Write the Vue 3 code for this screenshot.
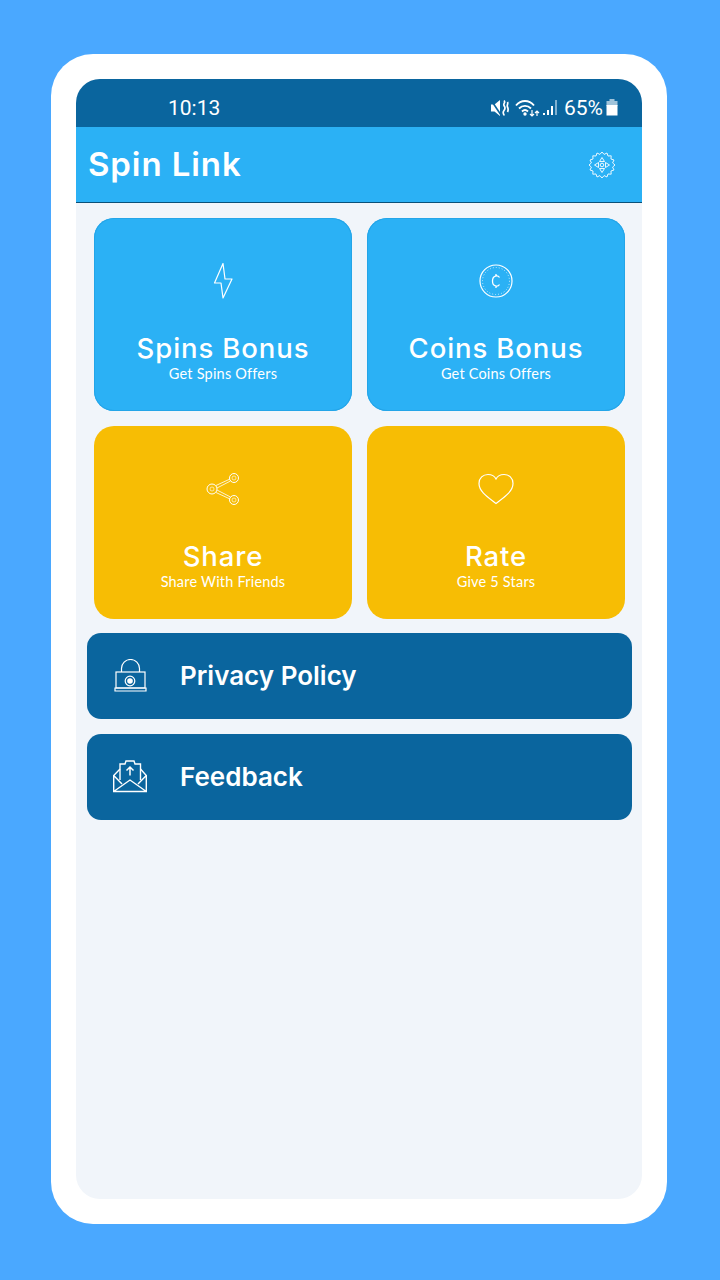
<script setup>
const cards = [
  { title: 'Spins Bonus', sub: 'Get Spins Offers', icon: 'bolt', tone: 'blue' },
  { title: 'Coins Bonus', sub: 'Get Coins Offers', icon: 'coin', tone: 'blue' },
  { title: 'Share', sub: 'Share With Friends', icon: 'share', tone: 'yellow' },
  { title: 'Rate', sub: 'Give 5 Stars', icon: 'heart', tone: 'yellow' }
]

// scalloped outline of the settings gear
const teeth = 16
let gear = ''
for (let i = 0; i < teeth * 2; i++) {
  const r = i % 2 === 0 ? 13 : 10.8
  const a = (i / (teeth * 2)) * Math.PI * 2
  const x = (14 + r * Math.cos(a)).toFixed(2)
  const y = (14 + r * Math.sin(a)).toFixed(2)
  gear += (i === 0 ? 'M' : 'L') + x + ' ' + y
}
gear += 'z'
</script>

<template>
  <div class="page">
    <div class="frame">
      <div class="screen">
        <div class="status">
          <span class="clock">10:13</span>
          <div class="status-right">
            <svg class="st-mute" width="19" height="18" viewBox="0 0 19 18">
              <path d="M1 5.500h3.500L10 1v16l-5.500-4.500H1z" fill="#fff" />
              <path d="M1 1l10 15" stroke="#0a659e" stroke-width="1.600" />
              <path d="M14 1.500c2 2-1 3 0 5s2 2.500 0 5 0 3 0 5M17.500 3c1 2-1 3 0 5s1 3 0 5" stroke="#fff" stroke-width="1.700" fill="none" />
            </svg>
            <svg class="st-wifi" width="25" height="18" viewBox="0 0 25 18">
              <path d="M1 6.500c5-6 13-6 18 0M4 9.500c3.500-3.500 8.500-3.500 12 0M7 12.500c2-2 4-2 6 0" stroke="#fff" stroke-width="1.900" fill="none" />
              <circle cx="10" cy="15" r="1.700" fill="#fff" />
              <path d="M17 11v6M15 15l2 2 2-2M22 17v-5M20 14l2-2 2 2" stroke="#fff" stroke-width="1.200" fill="none" />
            </svg>
            <svg class="st-signal" width="15" height="17" viewBox="0 0 15 17">
              <rect x="0" y="14" width="2" height="2" fill="#fff" />
              <rect x="4" y="11" width="2" height="5" fill="#fff" />
              <rect x="8" y="7" width="2" height="9" fill="#fff" />
              <rect x="12" y="1" width="2" height="15" fill="#7fb0d0" />
            </svg>
            <span class="pct">65%</span>
            <svg class="st-batt" width="12" height="17" viewBox="0 0 12 17">
              <rect x="3.500" y="0" width="5" height="2" fill="#9fc3da" />
              <rect x="0.500" y="2" width="11" height="5" fill="#9fc3da" />
              <rect x="0.500" y="6" width="11" height="10.500" fill="#fff" />
            </svg>
          </div>
        </div>

        <div class="appbar">
          <h1 class="app-title">Spin Link</h1>
          <svg width="28" height="28" viewBox="0 0 28 28" fill="none" stroke="#fff" stroke-width="0.900">
            <path :d="gear" stroke-linejoin="round" />
            <circle cx="14" cy="14" r="1.800" />
            <path d="M11.500 10.500l2.500-4 2.500 4zM11.500 17.500l2.500 4 2.500-4zM10.500 11.500l-4 2.500 4 2.500zM17.500 11.500l4 2.500-4 2.500z" />
          </svg>
        </div>

        <div class="content">
          <div class="grid">
            <div v-for="c in cards" :key="c.title" class="card" :class="c.tone">
              <div class="card-icon">
                <svg v-if="c.icon === 'bolt'" width="20" height="36" viewBox="0 0 20 36" fill="none" stroke="#fff" stroke-width="1.200" stroke-linejoin="round">
                  <path d="M10 .5L1.500 20H8l2 15 9-19h-7z" />
                </svg>
                <svg v-else-if="c.icon === 'coin'" width="34" height="34" viewBox="0 0 34 34" fill="none" stroke="#fff">
                  <circle cx="17" cy="17" r="16" stroke-width="1.200" />
                  <circle cx="17" cy="17" r="13.500" stroke-width="0.700" stroke-dasharray="1 2" />
                  <path d="M20.500 13.500c-1.500-2.500-7-2.500-7 3.500s5.500 6 7 3.500M17 10v2.500M17 21.500V24" stroke-width="1.300" />
                </svg>
                <svg v-else-if="c.icon === 'share'" width="34" height="34" viewBox="0 0 34 34" fill="none" stroke="#fff" stroke-width="1">
                  <circle cx="6" cy="17" r="5" />
                  <circle cx="6" cy="17" r="2" stroke-width="0.600" />
                  <circle cx="28" cy="6" r="4.500" />
                  <circle cx="28" cy="6" r="2" stroke-width="0.600" />
                  <circle cx="28" cy="28" r="4.500" />
                  <circle cx="28" cy="28" r="2" stroke-width="0.600" />
                  <path d="M10 13.500l14-6.500M11 16l13.500-7M10 20.500l14 6.500M11 18l13.500 7" stroke-width="0.800" />
                </svg>
                <svg v-else width="36" height="32" viewBox="0 0 36 32" fill="none" stroke="#fff" stroke-width="1.200">
                  <path d="M18 30.500C11 25 1 19 1 10.500 1 5 5 1.500 10 1.500c3.500 0 6.500 1.500 8 4.500 1.500-3 4.500-4.500 8-4.500 5 0 9 3.500 9 9 0 8.500-10 14.500-17 20z" />
                </svg>
              </div>
              <div class="card-title">{{ c.title }}</div>
              <div class="card-sub">{{ c.sub }}</div>
            </div>
          </div>

          <div class="rows">
            <div class="row">
              <svg class="row-icon" width="34" height="34" viewBox="0 0 34 34" fill="none" stroke="#fff" stroke-width="1.200">
                <path d="M8.500 13V9.500a9 9 0 0 1 18 0V13" />
                <rect x="3" y="13" width="29" height="16" />
                <path d="M2 29h31v3H2z" />
                <circle cx="17" cy="22" r="4.800" />
                <circle cx="17" cy="22" r="2.200" fill="#fff" />
              </svg>
              <span class="row-label">Privacy Policy</span>
            </div>
            <div class="row">
              <svg class="row-icon" width="34" height="34" viewBox="0 0 34 34" fill="none" stroke="#fff" stroke-width="1.400">
                <path d="M.7 15.500v16h32.600v-16M7 9L.7 15.500 9 24M27.500 9l5.800 6.500L25 24M.7 31.500L17 20l16.300 11.500" />
                <path d="M7 20V4h5l1-3h8l1 3h5.500v16" />
                <path d="M17 15.500V7M13.500 10.500L17 7l3.500 3.500" stroke-width="1.500" />
              </svg>
              <span class="row-label">Feedback</span>
            </div>
          </div>
        </div>
      </div>
    </div>
  </div>
</template>

<style scoped>
.page {
  width: 720px;
  height: 1280px;
  box-sizing: border-box;
  padding: 54px 53px 56px 51px;
  background: #4aa8ff;
}
.frame {
  height: 100%;
  box-sizing: border-box;
  padding: 25px;
  background: #fff;
  border-radius: 42px;
}
.screen {
  height: 100%;
  display: flex;
  flex-direction: column;
  border-radius: 24px;
  overflow: hidden;
  background: #f1f5fa;
}
.status {
  height: 48px;
  flex: none;
  display: flex;
  align-items: center;
  justify-content: space-between;
  padding: 0 24px 0 92px;
  background: #0a659e;
  color: #fff;
  font-family: Roboto, sans-serif;
}
.clock {
  font-size: 21px;
  font-weight: 400;
  margin-top: 9px;
}
.status-right {
  display: flex;
  align-items: center;
  margin-top: 9px;
}
.st-wifi {
  margin-left: 6px;
}
.st-signal {
  margin-left: 3px;
}
.pct {
  font-size: 21px;
  font-weight: 400;
  margin-left: 6px;
}
.st-batt {
  margin-left: 3px;
}
.appbar {
  height: 76px;
  flex: none;
  box-sizing: border-box;
  display: flex;
  align-items: center;
  justify-content: space-between;
  padding: 0 26px 0 12px;
  background: #2bb1f5;
  border-bottom: 1.500px solid #0a5078;
}
.app-title {
  margin: 0 0 2px;
  color: #fff;
  font-family: Inter, sans-serif;
  font-size: 33px;
  font-weight: 600;
  letter-spacing: 0.9px;
}
.content {
  flex: 1;
  padding: 15px 10px 0 11px;
}
.grid {
  display: grid;
  grid-template-columns: 258px 258px;
  grid-auto-rows: 193px;
  gap: 15px 15px;
  padding: 0 7px;
}
.card {
  display: flex;
  flex-direction: column;
  align-items: center;
  border-radius: 20px;
  color: #fff;
}
.blue {
  background: #2bb1f5;
  box-shadow: inset 0 0 0 1px #24a5e8;
}
.yellow {
  background: #f7bd04;
}
.card-icon {
  height: 36px;
  margin-top: 45px;
  display: flex;
  align-items: center;
  justify-content: center;
}
.card-title {
  margin-top: 31px;
  font-family: Inter, sans-serif;
  font-size: 27.500px;
  line-height: 36px;
  font-weight: 500;
  letter-spacing: 0.9px;
}
.card-sub {
  margin-top: -1px;
  font-family: Lato, sans-serif;
  font-size: 14.500px;
  line-height: 18px;
  letter-spacing: 0.2px;
}
.rows {
  display: flex;
  flex-direction: column;
  gap: 15px;
  margin-top: 14px;
}
.row {
  height: 86px;
  display: flex;
  align-items: center;
  padding-left: 26px;
  background: #0a659e;
  border-radius: 14px;
  color: #fff;
}
.row-icon {
  flex: none;
}
.row-label {
  margin-left: 33px;
  margin-bottom: 2px;
  font-family: Inter, sans-serif;
  font-size: 26px;
  font-weight: 600;
  letter-spacing: 0;
}
</style>
